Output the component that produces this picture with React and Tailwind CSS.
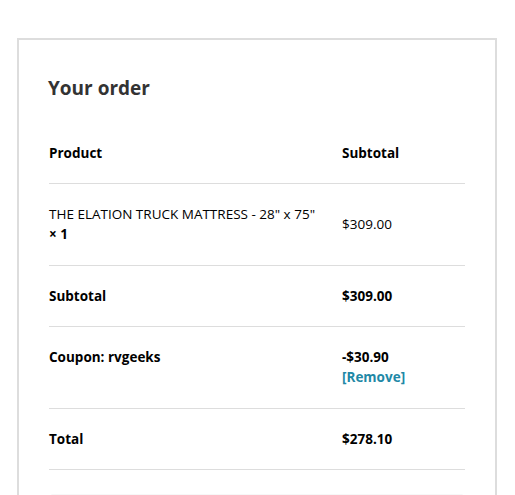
import React from 'react';

const rows = [
    { label: 'Subtotal', value: '$309.00' },
];

const App = () => {
    return (
        <div className="min-h-[495px] bg-white pt-[38px] pl-[17px] pr-[18px] font-['Open_Sans',sans-serif] text-[13.5px] leading-[20px] text-black">
            <div className="border-2 border-b-0 border-[#dddddd] px-[30px] pt-[33.5px] pb-[40px]">
                <h3 className="-ml-[1px] text-[19px] leading-[28px] font-bold text-[#333333]">Your order</h3>

                <div className="mt-[21px]">
                    {/* header */}
                    <div className="grid grid-cols-[293px_1fr] border-b border-[#dddddd] py-[20.25px] font-bold">
                        <div>Product</div>
                        <div>Subtotal</div>
                    </div>

                    {/* cart item */}
                    <div className="grid grid-cols-[293px_1fr] items-center border-b border-[#dddddd] py-[20.25px]">
                        <div className="pr-[20px]">
                            THE ELATION TRUCK MATTRESS - 28" x 75" <strong className="font-bold">× 1</strong>
                        </div>
                        <div>$309.00</div>
                    </div>

                    {rows.map((r) => (
                        <div key={r.label} className="grid grid-cols-[293px_1fr] border-b border-[#dddddd] py-[20.25px] font-bold">
                            <div>{r.label}</div>
                            <div>{r.value}</div>
                        </div>
                    ))}

                    {/* coupon */}
                    <div className="grid grid-cols-[293px_1fr] border-b border-[#dddddd] py-[20.25px] font-bold">
                        <div>Coupon: rvgeeks</div>
                        <div>
                            <div>-$30.90</div>
                            <a href="#" className="font-bold text-[#2188a6]">[Remove]</a>
                        </div>
                    </div>

                    <div className="grid grid-cols-[293px_1fr] border-b border-[#dddddd] py-[20.25px] font-bold">
                        <div>Total</div>
                        <div>$278.10</div>
                    </div>
                </div>

                {/* payment methods box (cut off) */}
                <div className="mx-[1px] mt-[24px] h-[40px] rounded-[3px] bg-[#f7f7f7]"></div>
            </div>
        </div>
    );
};

export default App;
